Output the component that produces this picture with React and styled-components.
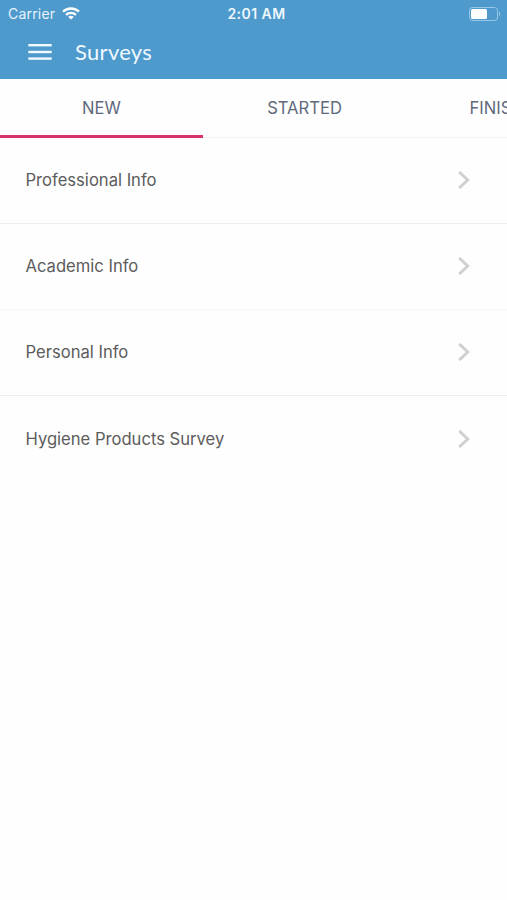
import React from 'react';
import styled, {createGlobalStyle} from 'styled-components';

const GlobalStyle = createGlobalStyle`
    *{
        box-sizing:border-box;
    }
    body{
        margin:0;
        background-color:#fff;
        font-family:Inter, "Liberation Sans", sans-serif;
        overflow:hidden;
    }
`;

const Screen = styled.div`
    width:507px;
    height:900px;
    overflow:hidden;
    background-color:#fefefe;
`;

const Header = styled.header`
    height:79px;
    color:#fff;
    background-color:#4e9acc;
`;

const StatusBar = styled.div`
    display:grid;
    grid-template-columns:1fr auto 1fr;
    align-items:center;
    height:27px;
    padding:0 6px 0 8px;
`;

const Carrier = styled.div`
    display:flex;
    align-items:center;
    gap:7px;
    font-size:14px;
    letter-spacing:0.2px;
    color:#e6f3fc;
`;

const Clock = styled.div`
    padding-left:4px;
    font-size:14px;
    font-weight:600;
    letter-spacing:0.45px;
    color:#edf7fe;
`;

const Battery = styled.svg`
    justify-self:end;
`;

const TitleBar = styled.div`
    display:flex;
    align-items:center;
    height:50px;
    padding-left:28px;
    gap:23px;
`;

const Title = styled.h1`
    margin:0;
    font-family:Lato, "Liberation Sans", sans-serif;
    font-size:22px;
    font-weight:400;
    line-height:28px;
    letter-spacing:0.3px;
    color:#eff8ff;
`;

const TabList = styled.nav`
    display:flex;
    height:59px;
    border-bottom:1px solid #f3f3f4;
`;

const Tab = styled.div`
    flex:0 0 203px;
    height:59px;
    padding-top:19px;
    text-align:center;
    font-size:16.6px;
    line-height:20px;
    color:#606a7c;
    border-bottom:3px solid ${props=>props.$active ? '#d6336f' : 'transparent'};
`;

const SurveyList = styled.ul`
    margin:0;
    padding:0;
    list-style:none;
`;

const SurveyItem = styled.li`
    display:flex;
    align-items:center;
    justify-content:space-between;
    height:86px;
    padding:0 37px 1px 25.5px;
    border-bottom:1px solid ${props=>props.$faint ? '#f8f8f8' : '#ededed'};
    &:last-child{
        border-bottom:none;
    }
`;

const SurveyName = styled.span`
    font-size:16.6px;
    line-height:22px;
    color:#5c5c5c;
`;

const WifiIcon = () => (
    <svg width="18" height="14" viewBox="0 0 18 14" fill="none" stroke="#fff" strokeWidth="2.3">
        <path d="M1 4.7C5.5 0.4 12.5 0.4 17 4.7"/>
        <path d="M4 7.9C6.8 5.3 11.2 5.3 14 7.9"/>
        <path d="M9 12.6L6.2 9.9C7.8 8.5 10.2 8.5 11.8 9.9Z" fill="#fff" stroke="none"/>
    </svg>
);

const BatteryIcon = () => (
    <Battery width="32" height="14" viewBox="0 0 32 14">
        <rect x="0.5" y="0.5" width="28" height="13" rx="3" fill="none" stroke="#95c8e9"/>
        <rect x="2" y="2" width="16" height="10" rx="1.5" fill="#fff"/>
        <path d="M30 4.8C31.6 5.4 31.6 8.6 30 9.2Z" fill="#95c8e9"/>
    </Battery>
);

const MenuIcon = () => (
    <svg width="24" height="17" viewBox="0 0 24 17" fill="#f1f9ff">
        <rect x="0.3" y="0" width="23.4" height="2.4"/>
        <rect x="0.3" y="6.8" width="23.4" height="2.4"/>
        <rect x="0.3" y="13.4" width="23.4" height="2.4"/>
    </svg>
);

const ChevronIcon = () => (
    <svg width="12" height="18" viewBox="0 0 12 18" fill="none" stroke="#d0d0d0" strokeWidth="3">
        <path d="M1.2 1L9.7 9L1.2 17"/>
    </svg>
);

const tabs = [
    {name:'NEW', active:true},
    {name:'STARTED'},
    {name:'FINISHED'}
];

const surveys = [
    {name:'Professional Info'},
    {name:'Academic Info', faint:true},
    {name:'Personal Info'},
    {name:'Hygiene Products Survey'}
];

const App = () => {
    return(
        <Screen>
            <GlobalStyle/>
            <Header>
                <StatusBar>
                    <Carrier>Carrier<WifiIcon/></Carrier>
                    <Clock>2:01 AM</Clock>
                    <BatteryIcon/>
                </StatusBar>
                <TitleBar>
                    <MenuIcon/>
                    <Title>Surveys</Title>
                </TitleBar>
            </Header>
            <TabList>
                {tabs.map(tab => <Tab key={tab.name} $active={tab.active}>{tab.name}</Tab>)}
            </TabList>
            <SurveyList>
                {surveys.map(survey => (
                    <SurveyItem key={survey.name} $faint={survey.faint}>
                        <SurveyName>{survey.name}</SurveyName>
                        <ChevronIcon/>
                    </SurveyItem>
                ))}
            </SurveyList>
        </Screen>
    );
}

export default App;
